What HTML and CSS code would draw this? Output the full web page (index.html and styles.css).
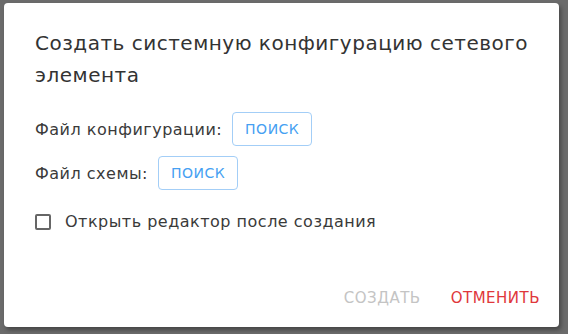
FILE: index.html
```html
<!DOCTYPE html>
<html lang="ru">
<head>
<meta charset="utf-8">
<link rel="stylesheet" href="styles.css">
</head>
<body>
<div class="backdrop">
  <div class="dialog">
    <h2 class="title">Создать системную конфигурацию сетевого элемента</h2>
    <div class="content">
      <div class="row">
        <span class="label">Файл конфигурации:</span>
        <button class="btn-outline">ПОИСК</button>
      </div>
      <div class="row">
        <span class="label">Файл схемы:</span>
        <button class="btn-outline">ПОИСК</button>
      </div>
      <label class="check-row">
        <span class="checkbox"></span>
        <span class="label">Открыть редактор после создания</span>
      </label>
    </div>
    <div class="actions">
      <button class="btn-text disabled">СОЗДАТЬ</button>
      <button class="btn-text danger">ОТМЕНИТЬ</button>
    </div>
  </div>
</div>
</body>
</html>
```
FILE: styles.css
```css
html, body {
  margin: 0;
  padding: 0;
  width: 568px;
  height: 334px;
  overflow: hidden;
}
body {
  font-family: "DejaVu Sans", sans-serif;
  background: #6b6b6b;
}
.backdrop {
  width: 568px;
  height: 334px;
  padding: 3px 0 0 4px;
  box-sizing: border-box;
}
.dialog {
  width: 555px;
  height: 324px;
  background: #fff;
  border-radius: 4px;
  box-shadow: 2px 3px 4px rgba(0,0,0,0.35);
  box-sizing: border-box;
  display: flex;
  flex-direction: column;
}
.title {
  margin: 0;
  padding: 24px 20px 0 31px;
  font-size: 20px;
  letter-spacing: 0.5px;
  font-weight: normal;
  line-height: 32px;
  color: #333;
}
.content {
  padding: 21px 24px 0 31px;
  display: flex;
  flex-direction: column;
  gap: 10px;
  flex: 1;
}
.row {
  display: flex;
  align-items: center;
  gap: 10px;
}
.label {
  font-size: 16px;
  letter-spacing: 0.5px;
  color: #3a3a3a;
}
.btn-outline {
  font-family: inherit;
  font-size: 14px;
  letter-spacing: 0.5px;
  color: #45a0f2;
  background: #fff;
  border: 1px solid #a3cef7;
  border-radius: 4px;
  height: 34px;
  width: 80px;
  padding: 0;
}
.check-row {
  display: flex;
  align-items: center;
  gap: 14px;
  margin-top: 12px;
}
.checkbox {
  width: 12px;
  height: 12px;
  border: 2px solid #666;
  border-radius: 2px;
}
.actions {
  display: flex;
  justify-content: flex-end;
  gap: 30px;
  padding: 0 19px 17px 0;
}
.btn-text {
  font-family: inherit;
  font-size: 15px;
  letter-spacing: 0.5px;
  background: none;
  border: none;
  padding: 0;
  height: 24px;
}
.disabled { color: #c4c4c4; }
.danger { color: #e0373b; }
```
